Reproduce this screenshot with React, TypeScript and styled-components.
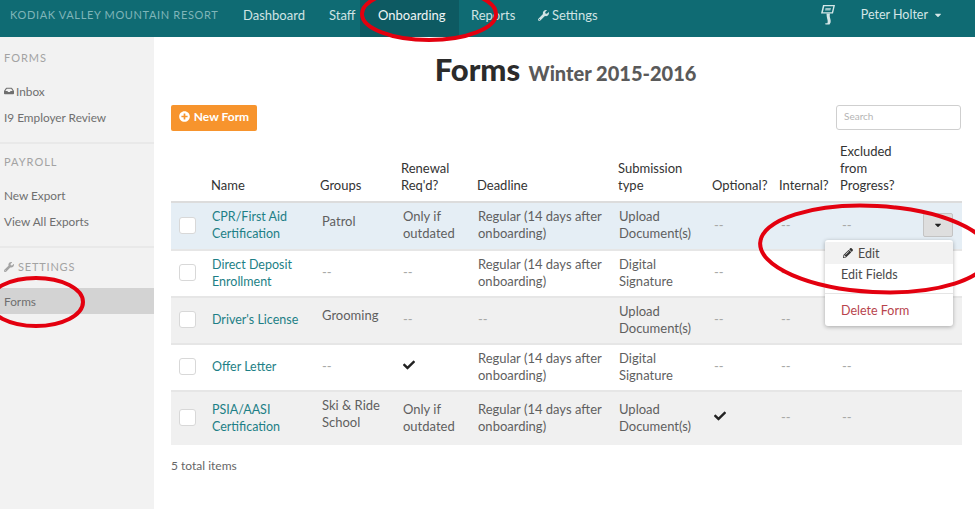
import React from 'react';
import styled, { createGlobalStyle } from 'styled-components';
import { FaInbox, FaWrench, FaPencilAlt, FaCheck, FaPlusCircle, FaCaretDown } from 'react-icons/fa';

const GlobalStyle = createGlobalStyle`
  html, body {
    margin: 0;
    padding: 0;
    background: #fff;
    font-family: Lato, "Open Sans", sans-serif;
    color: #555;
    font-size: 13px;
  }
  #root { height: 509px; overflow: hidden; }
`;

const Page = styled.div`
  position: relative;
  width: 975px;
  height: 509px;
  overflow: hidden;
  display: flex;
  flex-direction: column;
`;

const TopBar = styled.header`
  height: 37px;
  flex: none;
  background: #0f6b73;
  display: flex;
  align-items: stretch;
  color: #d4e6e7;
`;

const Brand = styled.div`
  width: 215px;
  padding-left: 10px;
  line-height: 30px;
  font-size: 11px;
  letter-spacing: 0.65px;
  color: #7fb5b9;
  white-space: nowrap;
`;

const NavItem = styled.a<{ $active?: boolean; $width: number; $pad: number }>`
  width: ${(p) => p.$width}px;
  box-sizing: border-box;
  padding: 0 0 7px ${(p) => p.$pad}px;
  display: flex;
  align-items: center;
  gap: 3px;
  font-size: 13px;
  background: ${(p) => (p.$active ? '#0d5a62' : 'transparent')};
  color: ${(p) => (p.$active ? '#f0f6f6' : '#d0e3e4')};
`;

const NavRight = styled.div`
  margin-left: auto;
  display: flex;
  align-items: flex-start;
  padding: 5px 32px 0 0;
  gap: 26px;
`;

const UserName = styled.span`
  font-size: 12.5px;
  line-height: 20px;
  display: flex;
  align-items: center;
  gap: 5px;
`;

const Body = styled.div`
  flex: 1;
  display: flex;
  min-height: 0;
`;

const Sidebar = styled.aside`
  width: 154px;
  flex: none;
  background: #f2f2f2;
  padding-top: 11px;
`;

const SideHeading = styled.h4`
  margin: 0 0 10px;
  padding-left: 4px;
  font-size: 11px;
  line-height: 20px;
  font-weight: 400;
  letter-spacing: 1px;
  color: #a3a3a3;
  display: flex;
  align-items: center;
  gap: 4px;
`;

const SideSection = styled.section`
  border-bottom: 2px solid #e9e9e9;
  padding-bottom: 12px;
  margin-bottom: 8px;
  &:last-child {
    border-bottom: 0;
    padding: 1px 0 0;
    ${SideHeading} { margin-bottom: 11px; letter-spacing: 0.8px; }
  }
`;

const SideLink = styled.a<{ $active?: boolean }>`
  display: flex;
  align-items: center;
  gap: 2px;
  height: 26px;
  padding-left: 4px;
  font-size: 11.8px;
  color: #6f6f6f;
  background: ${(p) => (p.$active ? '#d3d3d3' : 'transparent')};
`;

const Main = styled.main`
  flex: 1;
  padding: 0 13px 0 17px;
`;

const Title = styled.h1`
  margin: 12px 0 0;
  height: 56px;
  text-align: center;
  font-size: 31px;
  line-height: 40px;
  font-weight: 900;
  color: #2b2b2b;
  padding-right: 2px;
`;

const Subtitle = styled.small`
  font-size: 20px;
  color: #5a5a5a;
  margin-left: 1px;
`;

const Toolbar = styled.div`
  display: flex;
  justify-content: space-between;
  align-items: flex-start;
  height: 38px;
`;

const NewButton = styled.button`
  width: 86px;
  height: 26px;
  border: 0;
  border-radius: 2px;
  background: #f7942d;
  color: #fff;
  font: 700 12px Lato, sans-serif;
  display: flex;
  align-items: center;
  justify-content: center;
  gap: 4px;
  padding: 0 0 3px;
`;

const Search = styled.input`
  width: 125px;
  height: 25px;
  box-sizing: border-box;
  margin-right: 1px;
  border: 1px solid #cfcfcf;
  border-radius: 3px;
  padding: 0 0 4px 7px;
  font: 10px Lato, sans-serif;
  &::placeholder { color: #b5b5b5; }
`;

const Table = styled.table`
  width: 791px;
  table-layout: fixed;
  border-collapse: collapse;
  line-height: 17px;
  font-size: 13px;
`;

const HeadCell = styled.th`
  font-weight: 400;
  text-align: left;
  vertical-align: bottom;
  color: #333;
  padding: 0 0 7px;
  border-bottom: 2px solid #dcdcdc;
`;

const Row = styled.tr<{ $tone: 'plain' | 'grey' | 'blue'; $height: number }>`
  height: ${(p) => p.$height}px;
  background: ${(p) => (p.$tone === 'blue' ? '#e5eef5' : p.$tone === 'grey' ? '#f0f0f0' : '#fff')};
  border-bottom: 2px solid #e6e6e6;
  &:last-child { border-bottom: 0; }
`;

const Cell = styled.td<{ $raised?: boolean; $inset?: number }>`
  padding: 0 4px ${(p) => (p.$raised ? '10px' : '2px')} ${(p) => p.$inset ?? 2}px;
  vertical-align: middle;
  color: #5f5f5f;
`;

const CheckCell = styled.td`
  padding: 0 0 2px 8px;
  vertical-align: middle;
`;

const CheckBox = styled.span`
  display: block;
  width: 15px;
  height: 15px;
  background: #fff;
  border: 1px solid #d8d8d8;
  border-radius: 3px;
`;

const NameLink = styled.a`
  font-size: 12.5px;
  color: #1d7f86;
`;

const Empty = styled.span`
  color: #a8a8a8;
`;

const ActionCell = styled.td`
  position: relative;
  padding: 0 9px 2px 2px;
  vertical-align: middle;
  color: #5f5f5f;
`;

const ActionInner = styled.div`
  display: flex;
  align-items: center;
  justify-content: space-between;
`;

const CaretButton = styled.button`
  width: 30px;
  height: 24px;
  padding: 0;
  border: 1px solid #c4c4c4;
  border-radius: 2px;
  background: #dedede;
  color: #222;
  display: flex;
  align-items: center;
  justify-content: center;
  font-size: 10px;
`;

const Menu = styled.div`
  position: absolute;
  z-index: 2;
  top: 37px;
  left: -15px;
  width: 128px;
  height: 86px;
  background: #fff;
  border-radius: 3px;
  box-shadow: 0 1px 4px rgba(0, 0, 0, 0.3);
  padding-top: 2px;
  box-sizing: border-box;
`;

const MenuItem = styled.div<{ $hover?: boolean; $danger?: boolean }>`
  height: ${(p) => (p.$hover ? '22px' : '20px')};
  display: flex;
  align-items: center;
  gap: 5px;
  padding-left: ${(p) => (p.$hover ? '18px' : '16px')};
  font-size: 12.5px;
  color: ${(p) => (p.$danger ? '#b8444c' : '#4a4a4a')};
  background: ${(p) => (p.$hover ? '#f2f2f2' : 'transparent')};
`;

const MenuDivider = styled.hr`
  margin: 9px 0 6px;
  border: 0;
  border-top: 1px solid #e5e5e5;
`;

const Footer = styled.p`
  margin: 13px 0 0;
  font-size: 12px;
  color: #666;
`;

const Annotations = styled.svg`
  position: absolute;
  inset: 0;
  z-index: 5;
  pointer-events: none;
`;

const Dash = () => <Empty>--</Empty>;

const columns = [40, 109, 81, 76, 141, 94, 67, 61, 122];

const regular = 'Regular (14 days after onboarding)';

const rows = [
  { name: 'CPR/First Aid Certification', groups: 'Patrol', renewal: 'Only if outdated', deadline: regular, type: 'Upload Document(s)', optional: false, tone: 'blue', height: 48 },
  { name: 'Direct Deposit Enrollment', groups: '', renewal: '', deadline: regular, type: 'Digital Signature', optional: false, tone: 'plain', height: 47 },
  { name: "Driver's License", groups: 'Grooming', renewal: '', deadline: '', type: 'Upload Document(s)', optional: false, tone: 'grey', height: 47 },
  { name: 'Offer Letter', groups: '', renewal: 'check', deadline: regular, type: 'Digital Signature', optional: false, tone: 'plain', height: 47 },
  { name: 'PSIA/AASI Certification', groups: 'Ski & Ride School', renewal: 'Only if outdated', deadline: regular, type: 'Upload Document(s)', optional: true, tone: 'grey', height: 54 },
] as const;

export default function App() {
  return (
    <Page>
      <GlobalStyle />
      <TopBar>
        <Brand>KODIAK VALLEY MOUNTAIN RESORT</Brand>
        <NavItem $width={86} $pad={18}>Dashboard</NavItem>
        <NavItem $width={49} $pad={18}>Staff</NavItem>
        <NavItem $width={99} $pad={18} $active>Onboarding</NavItem>
        <NavItem $width={66} $pad={12}>Reports</NavItem>
        <NavItem $width={76} $pad={13}>
          <FaWrench size={11} />
          Settings
        </NavItem>
        <NavRight>
          <svg width="15" height="20" viewBox="0 0 15 20" fill="#d4e6e7">
            <path d="M3 0h12l-2 8.500H1zM4.300 1.300l-1.400 5.900h9l1.400-5.900z" fillRule="evenodd" />
            <path d="M5.500 3h5.500l-.7 2.500H5z" opacity="0.7" />
            <path d="M6.500 8.500h3.500c-.5 2-.3 3.500.3 5.200.5 1.300.5 2.500.3 3.800l-1.100 2H5.500l-.3-1.200h2.200c.6-1.500.3-3-.2-4.500-.5-1.700-.6-3.300-.700-5.300z" />
          </svg>
          <UserName>
            Peter Holter
            <FaCaretDown size={10} />
          </UserName>
        </NavRight>
      </TopBar>
      <Body>
        <Sidebar>
          <SideSection>
            <SideHeading>FORMS</SideHeading>
            <SideLink><FaInbox size={10} />Inbox</SideLink>
            <SideLink>I9 Employer Review</SideLink>
          </SideSection>
          <SideSection>
            <SideHeading>PAYROLL</SideHeading>
            <SideLink>New Export</SideLink>
            <SideLink>View All Exports</SideLink>
          </SideSection>
          <SideSection>
            <SideHeading><FaWrench size={10} />SETTINGS</SideHeading>
            <SideLink $active>Forms</SideLink>
          </SideSection>
        </Sidebar>
        <Main>
          <Title>
            Forms <Subtitle>Winter 2015-2016</Subtitle>
          </Title>
          <Toolbar>
            <NewButton><FaPlusCircle size={11} />New Form</NewButton>
            <Search placeholder="Search" />
          </Toolbar>
          <Table>
            <colgroup>
              {columns.map((w, i) => <col key={i} width={w} />)}
            </colgroup>
            <thead>
              <tr>
                <HeadCell />
                <HeadCell>Name</HeadCell>
                <HeadCell>Groups</HeadCell>
                <HeadCell>Renewal<br />Req'd?</HeadCell>
                <HeadCell>Deadline</HeadCell>
                <HeadCell>Submission<br />type</HeadCell>
                <HeadCell>Optional?</HeadCell>
                <HeadCell>Internal?</HeadCell>
                <HeadCell>Excluded<br />from<br />Progress?</HeadCell>
              </tr>
            </thead>
            <tbody>
              {rows.map((row, i) => (
                <Row key={row.name} $tone={row.tone} $height={row.height}>
                  <CheckCell><CheckBox /></CheckCell>
                  <Cell $inset={1}><NameLink>{row.name}</NameLink></Cell>
                  <Cell $raised={!!row.groups}>{row.groups || <Dash />}</Cell>
                  <Cell>
                    {row.renewal === 'check' ? <FaCheck size={12} color="#222" /> : row.renewal || <Dash />}
                  </Cell>
                  <Cell $inset={1}>{row.deadline || <Dash />}</Cell>
                  <Cell $inset={1}>{row.type}</Cell>
                  <Cell>{row.optional ? <FaCheck size={12} color="#222" /> : <Dash />}</Cell>
                  <Cell><Dash /></Cell>
                  <ActionCell>
                    <ActionInner>
                      <Dash />
                      {i === 0 && <CaretButton><FaCaretDown /></CaretButton>}
                    </ActionInner>
                    {i === 0 && (
                      <Menu>
                        <MenuItem $hover><FaPencilAlt size={10} color="#333" />Edit</MenuItem>
                        <MenuItem>Edit Fields</MenuItem>
                        <MenuDivider />
                        <MenuItem $danger>Delete Form</MenuItem>
                      </Menu>
                    )}
                  </ActionCell>
                </Row>
              ))}
            </tbody>
          </Table>
          <Footer>5 total items</Footer>
        </Main>
      </Body>
      <Annotations width="975" height="509" viewBox="0 0 975 509" fill="none" stroke="#e3000f" strokeWidth="4">
        <ellipse cx="429" cy="14" rx="67" ry="26" />
        <ellipse cx="36" cy="302" rx="47" ry="24" />
        <ellipse cx="875" cy="249" rx="115" ry="43" transform="rotate(3 875 249)" />
      </Annotations>
    </Page>
  );
}
